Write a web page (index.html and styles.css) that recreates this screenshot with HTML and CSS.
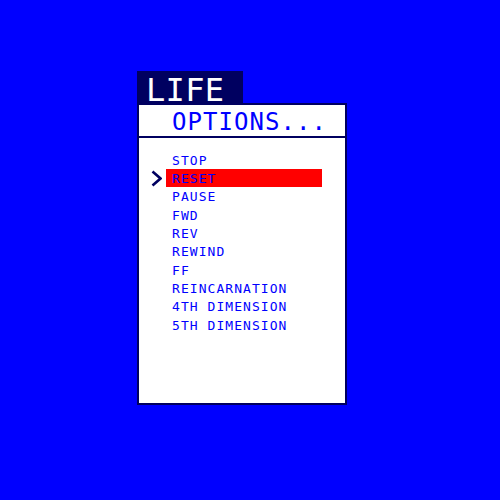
FILE: index.html
```html
<!DOCTYPE html>
<html>
<head>
<meta charset="utf-8">
<link rel="stylesheet" href="styles.css">
</head>
<body>
<div class="screen">
  <div class="tab">LIFE</div>
  <div class="panel">
    <div class="header">OPTIONS...</div>
    <ul class="menu">
      <li class="item"><span class="marker"></span><span class="label">STOP</span></li>
      <li class="item selected"><span class="marker"><svg width="11" height="17" viewBox="0 0 11 17"><polyline points="1.5,1.5 9.5,8.5 1.5,15.5" fill="none" stroke="#000060" stroke-width="2.6" stroke-linejoin="miter"/></svg></span><span class="label">RESET</span></li>
      <li class="item"><span class="marker"></span><span class="label">PAUSE</span></li>
      <li class="item"><span class="marker"></span><span class="label">FWD</span></li>
      <li class="item"><span class="marker"></span><span class="label">REV</span></li>
      <li class="item"><span class="marker"></span><span class="label">REWIND</span></li>
      <li class="item"><span class="marker"></span><span class="label">FF</span></li>
      <li class="item"><span class="marker"></span><span class="label">REINCARNATION</span></li>
      <li class="item"><span class="marker"></span><span class="label">4TH DIMENSION</span></li>
      <li class="item"><span class="marker"></span><span class="label">5TH DIMENSION</span></li>
    </ul>
  </div>
</div>
</body>
</html>
```
FILE: styles.css
```css
html, body {
  margin: 0;
  padding: 0;
  background: #0000ff;
  height: 100%;
}
.screen {
  padding: 71px 0 0 137px;
  font-family: "DejaVu Sans Mono", monospace;
}
.tab {
  width: 106px;
  height: 32px;
  box-sizing: border-box;
  background: #000060;
  color: #ffffff;
  font-size: 32px;
  line-height: 32px;
  letter-spacing: 0.3px;
  padding: 3px 0 0 9px;
}
.panel {
  width: 210px;
  height: 302px;
  box-sizing: border-box;
  background: #ffffff;
  border: 2px solid #000060;
}
.header {
  height: 33px;
  box-sizing: border-box;
  border-bottom: 2px solid #000060;
  padding: 4px 0 0 33px;
  font-size: 24px;
  line-height: 27px;
  letter-spacing: 1.05px;
  color: #0000ff;
}
.menu {
  list-style: none;
  margin: 0;
  padding: 12.7px 0 0 0;
}
.item {
  display: flex;
  height: 18.33px;
  align-items: flex-start;
}
.marker {
  width: 27px;
  height: 18px;
  display: flex;
  align-items: center;
  padding-left: 12px;
  box-sizing: border-box;
}
.marker svg {
  display: block;
}
.label {
  width: 156px;
  height: 18px;
  box-sizing: border-box;
  padding: 1.9px 0 0 6px;
  font-size: 13px;
  line-height: 16.1px;
  letter-spacing: 1.05px;
  color: #0000ff;
}
.selected .label {
  background: #ff0000;
}
```
